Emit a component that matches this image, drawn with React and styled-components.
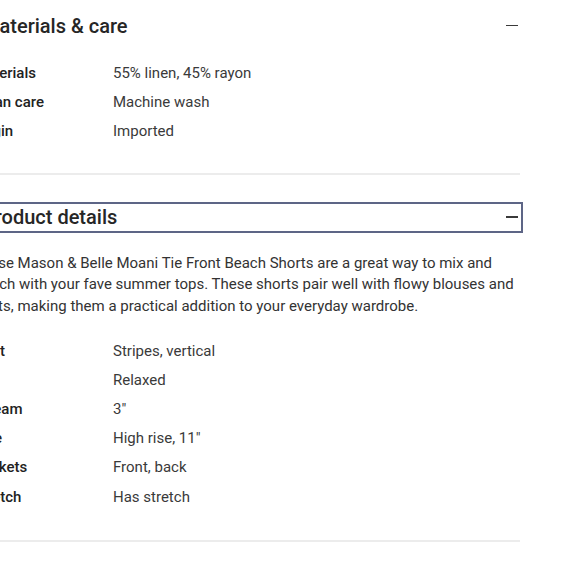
import React from "react";
import styled, { createGlobalStyle } from "styled-components";

const Global = createGlobalStyle`
  html, body { margin: 0; padding: 0; background: #fff; }
  body { font-family: Roboto, "Liberation Sans", sans-serif; color: #2e2e2e; overflow: hidden; }
`;

const Page = styled.div`
  width: 547px;
  margin-left: -27px;
  padding-top: 10px;
`;

const Section = styled.section`
  border-bottom: 2px solid #ececec;
  padding-bottom: ${(p) => p.$pb || 27}px;
  margin-bottom: 27px;
`;

const HeadButton = styled.button`
  all: unset;
  box-sizing: border-box;
  width: calc(100% + 6px);
  height: 31px;
  margin-left: -3px;
  padding: 0 3px 0 10px;
  display: flex;
  align-items: center;
  justify-content: space-between;
  border: 2px solid ${(p) => (p.$focused ? "#5d6586" : "transparent")};
  font-family: Roboto, "Liberation Sans", sans-serif;
  font-size: 20px;
  font-weight: 500;
  color: #262626;
`;

const Minus = styled.span`
  width: 12px;
  height: 1.6px;
  background: #3a3a3a;
`;

const Content = styled.div`
  padding-top: 17px;
`;

const Para = styled.p`
  margin: 3px 0 19px;
  font-size: 15px;
  line-height: 21.5px;
  color: #333;
`;

const Specs = styled.dl`
  margin: 0;
  display: grid;
  grid-template-columns: 140px 1fr;
  grid-auto-rows: 29.2px;
  align-items: center;
  font-size: 15px;
`;

const Label = styled.dt`
  font-weight: 500;
  color: #222;
`;

const Value = styled.dd`
  margin: 0;
  color: #3a3a3a;
`;

const Accordion = ({ title, focused, pb, children }) => (
  <Section $pb={pb}>
    <HeadButton $focused={focused}>
      <span>{title}</span>
      <Minus />
    </HeadButton>
    <Content>{children}</Content>
  </Section>
);

const SpecList = ({ rows }) => (
  <Specs>
    {rows.map(([k, v]) => (
      <React.Fragment key={k}>
        <Label>{k}</Label>
        <Value>{v}</Value>
      </React.Fragment>
    ))}
  </Specs>
);

export default function App() {
  return (
    <>
      <Global />
      <Page>
        <Accordion title="Materials & care">
          <SpecList
            rows={[
              ["Materials", "55% linen, 45% rayon"],
              ["Clean care", "Machine wash"],
              ["Origin", "Imported"],
            ]}
          />
        </Accordion>
        <Accordion title="Product details" focused pb={29}>
          <Para>
            These Mason &amp; Belle Moani Tie Front Beach Shorts are a great way to mix and
            match with your fave summer tops. These shorts pair well with flowy blouses and
            shirts, making them a practical addition to your everyday wardrobe.
          </Para>
          <SpecList
            rows={[
              ["Print", "Stripes, vertical"],
              ["Fit", "Relaxed"],
              ["Inseam", "3\""],
              ["Rise", "High rise, 11\""],
              ["Pockets", "Front, back"],
              ["Stretch", "Has stretch"],
            ]}
          />
        </Accordion>
      </Page>
    </>
  );
}
